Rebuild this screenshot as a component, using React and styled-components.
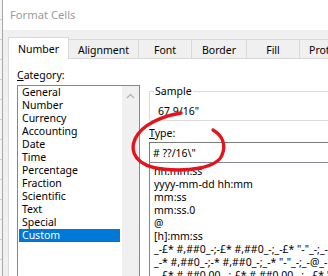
import React from 'react';
import styled, { createGlobalStyle } from 'styled-components';

const Global = createGlobalStyle`
  html, body { margin: 0; padding: 0; background: #fff; }
  body { font-family: "Noto Sans", "Open Sans", sans-serif; -webkit-font-smoothing: antialiased; }
`;

const Screen = styled.div`
  position: relative;
  width: 328px;
  height: 276px;
  overflow: hidden;
  display: flex;
  background: #fff;
`;

const SheetEdge = styled.div`
  flex: none;
  width: 2px;
  border-right: 1px solid #a8a8a8;
  background: repeating-linear-gradient(to bottom, #f4f4f4 0 19px, #d0d0d0 19px 20px);
`;

const Dialog = styled.div`
  flex: 1;
  min-width: 0;
  display: flex;
  flex-direction: column;
`;

const TitleBar = styled.div`
  flex: none;
  height: 30px;
  display: flex;
  align-items: center;
  padding-left: 7px;
  padding-bottom: 1px;
  box-sizing: border-box;
  color: #9b9b9b;
  font-size: 11.2px;
  background: #fff;
`;

const Body = styled.div`
  flex: 1;
  display: flex;
  flex-direction: column;
  background: #f0f0f0;
  padding-left: 5px;
`;

const TabStrip = styled.div`
  flex: none;
  height: 28px;
  display: flex;
  align-items: flex-end;
  position: relative;
  z-index: 1;
`;

const Tab = styled.div`
  flex: none;
  box-sizing: border-box;
  width: ${p => p.$w}px;
  height: ${p => (p.$active ? 22 : 19)}px;
  margin-bottom: ${p => (p.$active ? -1 : 0)}px;
  display: flex;
  align-items: center;
  justify-content: center;
  padding-top: ${p => (p.$active ? 0 : 1)}px;
  font-size: 10.5px;
  color: #000;
  background: ${p => (p.$active ? '#fff' : '#f0f0f0')};
  border-top: 1px solid #d9d9d9;
  border-right: 1px solid #d9d9d9;
  border-left: ${p => (p.$first ? '1px solid #d9d9d9' : 'none')};
  white-space: nowrap;
  overflow: hidden;
`;

const Panel = styled.div`
  flex: 1;
  display: flex;
  gap: 9px;
  background: #fff;
  border-top: 1px solid #d9d9d9;
  border-left: 1px solid #d9d9d9;
  padding: 10px 0 0 8px;
  font-size: 10.5px;
  color: #000;
`;

const LeftColumn = styled.div`
  flex: none;
  width: 123px;
  display: flex;
  flex-direction: column;
`;

const RightColumn = styled.div`
  flex: none;
  width: 300px;
  display: flex;
  flex-direction: column;
`;

const Label = styled.div`
  line-height: 13px;
  height: 13px;
  white-space: nowrap;
  margin-top: ${p => p.$mt || 0}px;
`;

const ListBox = styled.div`
  margin-top: 3px;
  height: 200px;
  box-sizing: border-box;
  border: 1px solid #828790;
  display: flex;
`;

const Items = styled.div`
  flex: 1;
  padding: 0 2px 0 1px;
`;

const Item = styled.div`
  height: 13px;
  line-height: 13px;
  padding-left: 3px;
  white-space: nowrap;
  background: ${p => (p.$selected ? '#0078d7' : 'transparent')};
  color: ${p => (p.$selected ? '#fff' : '#000')};
`;

const ScrollBar = styled.div`
  flex: none;
  width: 17px;
  background: #f0f0f0;
  display: flex;
  justify-content: center;
  padding-top: 7px;
  align-items: flex-start;
`;

const Group = styled.fieldset`
  margin: 16px 0 0 0;
  padding: 0;
  border: 1px solid #dcdcdc;
  min-width: 0;
`;

const Legend = styled.legend`
  margin-left: 4px;
  padding: 0 1px;
  line-height: 13px;
  font-size: 10.5px;
`;

const SampleValue = styled.div`
  line-height: 13px;
  padding: 7px 0 2px 8px;
  white-space: nowrap;
`;

const TypeInput = styled.div`
  margin-top: 2px;
  height: 21px;
  box-sizing: border-box;
  border: 1px solid #7a7a7a;
  padding-left: 3px;
  display: flex;
  align-items: center;
  white-space: nowrap;
`;

const FormatList = styled.div`
  margin-top: -1px;
  height: 140px;
  box-sizing: border-box;
  border: 1px solid #828790;
  border-right: none;
  padding: 2px 0 0 4px;
  overflow: hidden;
`;

const FormatItem = styled.div`
  height: 13px;
  line-height: 13px;
  white-space: pre;
`;

const Annotation = styled.svg`
  position: absolute;
  left: 0;
  top: 0;
  pointer-events: none;
`;

const tabs = [
  { label: 'Number', w: 61, active: true, first: true },
  { label: 'Alignment', w: 70 },
  { label: 'Font', w: 53 },
  { label: 'Border', w: 55 },
  { label: 'Fill', w: 53 },
  { label: 'Protection', w: 70 },
];

const categories = [
  'General', 'Number', 'Currency', 'Accounting', 'Date', 'Time',
  'Percentage', 'Fraction', 'Scientific', 'Text', 'Special', 'Custom',
];

const formats = [
  'hh:mm:ss',
  'yyyy-mm-dd hh:mm',
  'mm:ss',
  'mm:ss.0',
  '@',
  '[h]:mm:ss',
  '_-£* #,##0_-;-£* #,##0_-;_-£* "-"_-;_-@_-',
  '_-* #,##0_-;-* #,##0_-;_-* "-"_-;_-@_-',
  '_-£* #,##0.00_-;-£* #,##0.00_-;_-£* "-"??_-;_-@_-',
];

export default function App() {
  return (
    <>
      <Global />
      <Screen>
        <SheetEdge />
        <Dialog>
          <TitleBar>Format Cells</TitleBar>
          <Body>
            <TabStrip>
              {tabs.map(t => (
                <Tab key={t.label} $w={t.w} $active={t.active} $first={t.first}>
                  {t.label}
                </Tab>
              ))}
            </TabStrip>
            <Panel>
              <LeftColumn>
                <Label><u>C</u>ategory:</Label>
                <ListBox>
                  <Items>
                    {categories.map(c => (
                      <Item key={c} $selected={c === 'Custom'}>{c}</Item>
                    ))}
                  </Items>
                  <ScrollBar>
                    <svg width="9" height="6" viewBox="0 0 9 6">
                      <polyline points="1,5 4.5,1.5 8,5" fill="none" stroke="#b4b4b4" strokeWidth="1.4" />
                    </svg>
                  </ScrollBar>
                </ListBox>
              </LeftColumn>
              <RightColumn>
                <Group>
                  <Legend>Sample</Legend>
                  <SampleValue>67 9/16"</SampleValue>
                </Group>
                <Label $mt={6}><u>T</u>ype:</Label>
                <TypeInput># ??/16\"</TypeInput>
                <FormatList>
                  {formats.map(f => (
                    <FormatItem key={f}>{f}</FormatItem>
                  ))}
                </FormatList>
              </RightColumn>
            </Panel>
          </Body>
        </Dialog>
        <Annotation width="328" height="276" viewBox="0 0 328 276">
          <path
            d="M181,113 C163,116 142,124 135,139 C129,153 137,166 162,169 C188,172 217,168 222,155 C226,145 223,136 213,130"
            fill="none"
            stroke="#e3141b"
            strokeWidth="3.4"
            strokeLinecap="round"
          />
        </Annotation>
      </Screen>
    </>
  );
}
